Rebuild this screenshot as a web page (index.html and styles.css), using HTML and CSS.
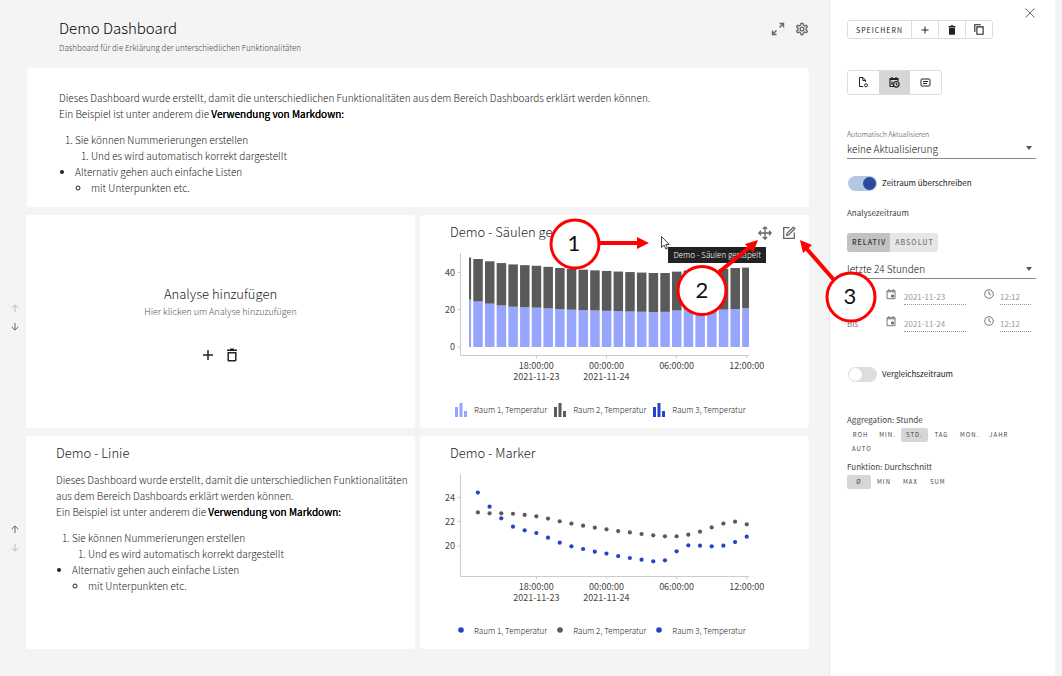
FILE: index.html
```html
<!DOCTYPE html>
<html lang="de">
<head>
<meta charset="utf-8">
<meta name="viewport" content="width=device-width, initial-scale=1">
<title>Demo Dashboard</title>
<link rel="stylesheet" href="styles.css">
</head>
<body>
<div class="app">
  <main class="dashboard">
    <header class="page-header">
      <div class="page-heading">
        <h1 class="page-title">Demo Dashboard</h1>
        <p class="page-subtitle">Dashboard für die Erklärung der unterschiedlichen Funktionalitäten</p>
      </div>
      <div class="page-actions">
        <button class="icon-button" type="button" aria-label="Vollbild">
          <svg width="14" height="14" viewBox="0 0 14 14" fill="none" stroke="currentColor" stroke-width="1.4"><path d="M8.5 1.500h4v4M12.300 1.700L8.500 5.500M5.500 12.500h-4v-4M1.700 12.300L5.500 8.500"/></svg>
        </button>
        <button class="icon-button" type="button" aria-label="Einstellungen">
          <svg width="14" height="14" viewBox="1 1 22 22" fill="currentColor"><path d="M12 8a4 4 0 1 1 0 8 4 4 0 0 1 0-8m0 2a2 2 0 1 0 0 4 2 2 0 0 0 0-4m-2 12c-.25 0-.46-.18-.5-.42l-.37-2.65c-.63-.25-1.170-.59-1.690-.99l-2.490 1.010c-.22.08-.49 0-.61-.22l-2-3.460c-.13-.22-.07-.49.12-.64l2.110-1.660L4.500 12l.07-1-2.110-1.630c-.19-.15-.25-.42-.12-.64l2-3.460c.12-.22.39-.31.61-.22l2.490 1c.52-.39 1.060-.73 1.690-.98l.37-2.650c.04-.24.25-.42.5-.42h4c.25 0 .46.18.5.42l.37 2.650c.63.25 1.170.59 1.690.98l2.490-1c.22-.09.49 0 .61.22l2 3.460c.13.22.07.49-.12.64L19.430 11l.07 1-.07 1 2.110 1.630c.19.15.25.42.12.64l-2 3.460c-.12.22-.39.31-.61.22l-2.490-1c-.52.39-1.060.73-1.690.98l-.37 2.650c-.04.24-.25.42-.5.42zm1.250-18l-.37 2.610c-1.200.25-2.260.89-3.030 1.780L5.440 7.350l-.75 1.300L6.800 10.200a6.500 6.500 0 0 0 0 3.600l-2.120 1.560.75 1.300 2.430-1.040c.77.88 1.820 1.520 3.010 1.760l.37 2.620h1.520l.37-2.610c1.190-.25 2.240-.89 3.010-1.770l2.430 1.040.75-1.300-2.120-1.550c.4-1.170.4-2.440 0-3.610l2.110-1.550-.75-1.300-2.410 1.040a5.420 5.420 0 0 0-3.030-1.770L12.750 4z"/></svg>
        </button>
      </div>
    </header>

    <section class="card intro">
      <div class="markdown">
        <p>Dieses Dashboard wurde erstellt, damit die unterschiedlichen Funktionalitäten aus dem Bereich Dashboards erklärt werden können.<br>Ein Beispiel ist unter anderem die <strong>Verwendung von Markdown:</strong></p>
        <ol><li>Sie können Nummerierungen erstellen<ol><li>Und es wird automatisch korrekt dargestellt</li></ol></li></ol>
        <ul><li>Alternativ gehen auch einfache Listen<ul><li>mit Unterpunkten etc.</li></ul></li></ul>
      </div>
    </section>

    <div class="row">
      <div class="row-move">
        <button class="icon-button faded" type="button" aria-label="Zeile nach oben" disabled><svg width="8" height="8" viewBox="0 0 8 8" fill="none" stroke="currentColor"><path d="M4 8V1M.7 4.200L4 .9l3.300 3.300"/></svg></button>
        <button class="icon-button" type="button" aria-label="Zeile nach unten"><svg width="8" height="8" viewBox="0 0 8 8" fill="none" stroke="currentColor"><path d="M4 0v7M.7 3.800L4 7.100l3.300-3.300"/></svg></button>
      </div>
      <section class="card empty-card">
        <h2 class="card-title">Analyse hinzufügen</h2>
        <p class="empty-hint">Hier klicken um Analyse hinzuzufügen</p>
        <div class="empty-actions">
          <button class="icon-button dark" type="button" aria-label="Hinzufügen"><svg width="10" height="14" viewBox="0 0 10 14" fill="none" stroke="currentColor" stroke-width="1.500"><path d="M5 2v10M0 7h10"/></svg></button>
          <button class="icon-button dark" type="button" aria-label="Löschen"><svg width="12" height="14" viewBox="0 0 12 14" fill="none" stroke="currentColor" stroke-width="1.500"><path d="M1 2.200h10M4 1.200h4M2.200 4.700h7.600v7.400q0 .7-.7.700H2.900q-.7 0-.7-.7z"/></svg></button>
        </div>
      </section>
      <section class="card chart-card">
        <div class="card-head">
          <h2 class="card-title">Demo - Säulen gestapelt</h2>
          <div class="card-actions">
            <button class="icon-button" type="button" aria-label="Verschieben"><svg width="14" height="14" viewBox="0 0 14 14" fill="none" stroke="currentColor" stroke-width="1.300"><path d="M7 1v12M1 7h12M4.800 3L7 .9 9.200 3M4.800 11L7 13.100 9.200 11M3 4.800L.9 7 3 9.200M11 4.800L13.100 7 11 9.200"/></svg></button>
            <button class="icon-button" type="button" aria-label="Bearbeiten"><svg width="14" height="14" viewBox="0 0 14 14" fill="none" stroke="currentColor" stroke-width="1.300"><path d="M7.500 1.700H1.700v10.600h10.600V6.500M4.600 9.400l.5-2L11.300 1.200l1.500 1.500L6.600 8.900z"/></svg></button>
          </div>
        </div>
        <svg class="chart" id="bar-chart" viewBox="0 0 389 140" role="img" aria-label="Gestapelte Säulen"></svg>
        <ul class="legend">
          <li><svg class="legend-icon series-1" width="12" height="14" viewBox="0 0 12 14"><path d="M0 4h3v10H0zM4.500 0h3v14h-3zM9 8h3v6H9z"/></svg>Raum 1, Temperatur</li>
          <li><svg class="legend-icon series-2" width="12" height="14" viewBox="0 0 12 14"><path d="M0 4h3v10H0zM4.500 0h3v14h-3zM9 8h3v6H9z"/></svg>Raum 2, Temperatur</li>
          <li><svg class="legend-icon series-3" width="12" height="14" viewBox="0 0 12 14"><path d="M0 4h3v10H0zM4.500 0h3v14h-3zM9 8h3v6H9z"/></svg>Raum 3, Temperatur</li>
        </ul>
        <div class="tooltip" role="tooltip">Demo - Säulen gestapelt</div>
        <svg class="callouts" width="340" height="115" viewBox="540 215 340 115">
          <path class="cursor" d="M661.500 236.500v11l2.600-2.400 1.700 4 1.700-.8-1.700-3.800h3.400z"/>
          <g class="callout-arrow"><path d="M600 243h40M718 273l33-27M834 280l-28-32"/></g>
          <g class="callout-head"><path d="M637 237l12 6-12 6zM758 240l-5 13-8-9zM800 240l12 5-9 8z"/></g>
          <g class="callout-ring"><circle cx="575" cy="244" r="24"/><circle cx="702" cy="290.500" r="24"/><circle cx="851" cy="297" r="24"/></g>
          <g class="callout-number"><text x="574" y="251">1</text><text x="702" y="298">2</text><text x="850" y="304">3</text></g>
        </svg>
      </section>
    </div>

    <div class="row">
      <div class="row-move">
        <button class="icon-button" type="button" aria-label="Zeile nach oben"><svg width="8" height="8" viewBox="0 0 8 8" fill="none" stroke="currentColor"><path d="M4 8V1M.7 4.200L4 .9l3.300 3.300"/></svg></button>
        <button class="icon-button faded" type="button" aria-label="Zeile nach unten" disabled><svg width="8" height="8" viewBox="0 0 8 8" fill="none" stroke="currentColor"><path d="M4 0v7M.7 3.800L4 7.100l3.300-3.300"/></svg></button>
      </div>
      <section class="card text-card">
        <h2 class="card-title">Demo - Linie</h2>
        <div class="markdown">
          <p>Dieses Dashboard wurde erstellt, damit die unterschiedlichen Funktionalitäten aus dem Bereich Dashboards erklärt werden können.<br>Ein Beispiel ist unter anderem die <strong>Verwendung von Markdown:</strong></p>
          <ol><li>Sie können Nummerierungen erstellen<ol><li>Und es wird automatisch korrekt dargestellt</li></ol></li></ol>
          <ul><li>Alternativ gehen auch einfache Listen<ul><li>mit Unterpunkten etc.</li></ul></li></ul>
        </div>
      </section>
      <section class="card chart-card">
        <div class="card-head"><h2 class="card-title">Demo - Marker</h2></div>
        <svg class="chart" id="marker-chart" viewBox="0 0 389 140" role="img" aria-label="Marker"></svg>
        <ul class="legend">
          <li><svg class="legend-icon series-3" width="12" height="14" viewBox="0 0 12 14"><circle cx="6" cy="6" r="2.800"/></svg>Raum 1, Temperatur</li>
          <li><svg class="legend-icon series-2" width="12" height="14" viewBox="0 0 12 14"><circle cx="6" cy="6" r="2.800"/></svg>Raum 2, Temperatur</li>
          <li><svg class="legend-icon series-3" width="12" height="14" viewBox="0 0 12 14"><circle cx="6" cy="6" r="2.800"/></svg>Raum 3, Temperatur</li>
        </ul>
      </section>
    </div>
  </main>

  <aside class="panel">
    <button class="icon-button close" type="button" aria-label="Schließen"><svg width="10" height="10" viewBox="0 0 10 10" fill="none" stroke="currentColor"><path d="M.5.5l9 9M9.500.5l-9 9"/></svg></button>
    <div class="button-group actions">
      <button class="wide" type="button">SPEICHERN</button>
      <button type="button" aria-label="Neu"><svg width="8" height="8" viewBox="0 0 8 8" fill="none" stroke="currentColor"><path d="M4 .5v7M.5 4h7"/></svg></button>
      <button type="button" aria-label="Löschen"><svg width="8" height="10" viewBox="0 0 8 10" fill="currentColor"><path d="M.5 1h2l.5-.8h2l.5.8h2v1.200h-7zM1 2.800h6V9q0 .8-.8.8H1.800Q1 9.800 1 9z"/></svg></button>
      <button type="button" aria-label="Kopieren"><svg width="10" height="11" viewBox="0 0 10 11" fill="none" stroke="currentColor" stroke-width="1.100"><path d="M.8 8V.8h6M2.900 2.900h6.200v7.300H2.900z"/></svg></button>
    </div>
    <div class="button-group tabs">
      <button type="button" aria-label="Dokument"><svg width="11" height="11" viewBox="0 0 11 11" fill="none" stroke="currentColor"><path d="M5 9.500H1.500v-9H5l2.500 2.700V5M4.800.7v2.800h2.700"/><circle cx="8" cy="8.300" r="1.500"/></svg></button>
      <button class="selected" type="button" aria-label="Zeitraum" aria-pressed="true"><svg width="11" height="11" viewBox="0 0 11 11" fill="none" stroke="currentColor" stroke-width="1.200"><path d="M5 9.500H1V1.500h8V4M1 2.500h8M3 0v2M7 0v2M3 4.500v3.500"/><circle cx="7.300" cy="7.300" r="2.800"/><path d="M7.300 5.700v1.700l1.200.7"/></svg></button>
      <button type="button" aria-label="Beschreibung"><svg width="11" height="9" viewBox="0 0 11 9" fill="none" stroke="currentColor"><rect x="1" y="1" width="9" height="7" rx="1"/><path d="M3 3.500h5M3 5.500h4"/></svg></button>
    </div>

    <label class="field-label" for="refresh">Automatisch Aktualisieren</label>
    <div class="select-wrap">
      <select id="refresh"><option>keine Aktualisierung</option></select>
    </div>

    <label class="switch override"><input type="checkbox" checked><span>Zeitraum überschreiben</span></label>

    <p class="small-text period-title">Analysezeitraum</p>
    <div class="mode-group">
      <button class="selected" type="button" aria-pressed="true">RELATIV</button>
      <button type="button">ABSOLUT</button>
    </div>
    <div class="select-wrap compact">
      <select aria-label="Zeitraum"><option>letzte 24 Stunden</option></select>
    </div>
    <div class="range-row">
      <label for="from-date">Von</label>
      <svg width="10" height="11" viewBox="0 0 10 11" fill="none" stroke="currentColor"><path d="M1 1.700h8v8H1zM1 2.800h8M2.800 0v2M7.200 0v2"/><path d="M5.500 6h2v2h-2z" fill="currentColor"/></svg>
      <input class="date-input" id="from-date" type="text" value="2021-11-23" disabled>
      <svg width="10" height="10" viewBox="0 0 10 10" fill="none" stroke="currentColor"><circle cx="5" cy="5" r="4.300"/><path d="M5 2.200V5l2 1.300"/></svg>
      <input type="text" value="12:12" aria-label="Uhrzeit von" disabled>
    </div>
    <div class="range-row">
      <label for="to-date">Bis</label>
      <svg width="10" height="11" viewBox="0 0 10 11" fill="none" stroke="currentColor"><path d="M1 1.700h8v8H1zM1 2.800h8M2.800 0v2M7.200 0v2"/><path d="M5.500 6h2v2h-2z" fill="currentColor"/></svg>
      <input class="date-input" id="to-date" type="text" value="2021-11-24" disabled>
      <svg width="10" height="10" viewBox="0 0 10 10" fill="none" stroke="currentColor"><circle cx="5" cy="5" r="4.300"/><path d="M5 2.200V5l2 1.300"/></svg>
      <input type="text" value="12:12" aria-label="Uhrzeit bis" disabled>
    </div>

    <label class="switch compare"><input type="checkbox"><span>Vergleichszeitraum</span></label>

    <p class="small-text">Aggregation: Stunde</p>
    <div class="chips">
      <button type="button">ROH</button><button type="button">MIN.</button><button class="selected" type="button" aria-pressed="true">STD.</button><button type="button">TAG</button><button type="button">MON.</button><button type="button">JAHR</button><button type="button">AUTO</button>
    </div>
    <p class="small-text">Funktion: Durchschnitt</p>
    <div class="chips narrow">
      <button class="selected" type="button" aria-pressed="true">Ø</button><button type="button">MIN</button><button type="button">MAX</button><button type="button">SUM</button>
    </div>
  </aside>
</div>
<script src="charts.js"></script>
</body>
</html>
```

FILE: styles.css
```css
* { box-sizing: border-box; }

body {
  margin: 0;
  background: #f4f4f4;
  color: #222;
  font: 300 10px/16px "Noto Sans CJK SC", "Open Sans", sans-serif;
}

h1, h2, p, ul, ol { margin: 0; padding: 0; font-weight: inherit; }
button, input, select { font: inherit; color: inherit; border: 0; margin: 0; padding: 0; background: none; }
button { cursor: pointer; }
svg { display: block; }

.app {
  display: grid;
  grid-template-columns: minmax(0, 1fr) 233px;
  min-height: 100vh;
}

.dashboard { padding: 0 20px 27px 0; }

.icon-button { display: flex; align-items: center; justify-content: center; color: #666; }
.icon-button.faded { color: #bbb; }
.icon-button.dark { color: #222; }

.page-header {
  display: flex;
  justify-content: space-between;
  height: 68px;
  padding: 17px 0 0 59px;
}
.page-title { font-size: 15px; line-height: 22px; color: #000; }
.page-subtitle { margin-top: 4px; font-size: 8px; line-height: 10px; color: #444; }
.page-actions { display: flex; gap: 10px; height: 24px; align-items: center; }

.card { position: relative; background: #fff; border-radius: 3px; }
.card-title { font-size: 13px; line-height: 18px; }

.intro { margin: 0 0 8px 27px; padding: 22px 32px 11px; }

.markdown { line-height: 16px; }
.markdown strong { font-weight: 400; color: #000; text-shadow: 0 0 0 #000; }
.markdown p { margin-bottom: 10px; }
.markdown ol, .markdown ul { padding-left: 16px; }

.row {
  display: grid;
  grid-template-columns: 21px minmax(0, 1fr) minmax(0, 1fr);
  column-gap: 5px;
  min-height: 213px;
  margin-bottom: 8px;
}
.row-move { display: flex; flex-direction: column; justify-content: center; align-items: center; gap: 11px; padding: 0 0 8px 9px; }

.empty-card { display: flex; flex-direction: column; align-items: center; padding-top: 70px; }
.empty-hint { margin-top: 1px; font-size: 9px; color: #555; }
.empty-actions { display: flex; gap: 13px; margin-top: 28px; }

.text-card { padding: 8px 4px 8px 30px; }
.text-card .markdown { margin-top: 10px; }

.card-head { display: flex; justify-content: space-between; height: 30px; padding: 8px 13px 0 30px; }
.card-actions { display: flex; gap: 10px; height: 20px; align-items: center; }
.chart { width: 100%; height: auto; }
.chart text { font-size: 9px; font-weight: 400; fill: #444; text-anchor: middle; }
.chart .y-label { text-anchor: end; }
.axis { fill: none; stroke: #ccc; }
.series-1 { fill: #98a5fd; }
.series-2 { fill: #5a5a5a; }
.series-3 { fill: #2344c6; }

.legend { display: flex; gap: 7px; padding: 18px 0 0 35px; list-style: none; font-size: 8px; line-height: 14px; }
.legend li { display: flex; gap: 7px; white-space: nowrap; }

.tooltip {
  position: absolute;
  top: 32px;
  right: 43px;
  padding: 0 5px;
  background: #222;
  color: #fff;
  font-size: 8px;
  line-height: 16px;
}
.callouts { position: absolute; top: 0; right: -71px; z-index: 2; pointer-events: none; }
.cursor { fill: #fff; stroke: #444; }
.callout-arrow { fill: none; stroke: #f00; stroke-width: 4; }
.callout-head { fill: #f00; }
.callout-ring { fill: #fff; stroke: #f00; stroke-width: 3; }
.callout-number { font: 22px Lato, sans-serif; fill: #111; text-anchor: middle; }

.panel {
  position: relative;
  padding: 20px 19px 20px 17px;
  background: #fff;
  border-left: 1px solid #e8e8e8;
  border-right: 7px solid #f4f4f4;
}
.close { position: absolute; top: 8px; right: 20px; }

.button-group {
  display: flex;
  width: max-content;
  border: 1px solid #ddd;
  border-radius: 3px;
  color: #222;
}
.button-group button { display: flex; align-items: center; justify-content: center; width: 27px; height: 17px; }
.button-group button + button { border-left: 1px solid #ddd; }
.button-group .wide { width: 63px; font-size: 7px; font-weight: 400; letter-spacing: 1px; }
.tabs { margin-top: 31px; }
.tabs button, .tabs button + button { width: 31px; height: 23px; border: 0; }
.tabs .selected { background: #d6d6d6; }

.field-label { display: block; margin-top: 34px; font-size: 7px; line-height: 10px; color: #444; }
.select-wrap { position: relative; border-bottom: 1px solid #888; }
.select-wrap::after {
  content: "";
  position: absolute;
  top: 7px;
  right: 4px;
  border: 3px solid transparent;
  border-top: 4px solid #555;
  border-bottom: 0;
}
.select-wrap select { display: block; width: 100%; height: 19px; appearance: none; line-height: 18px; color: #111; }

.switch { display: flex; align-items: center; gap: 5px; padding-left: 1px; font-size: 8px; line-height: 16px; color: #222; }
.switch input {
  appearance: none;
  display: flex;
  width: 29px;
  height: 15px;
  padding: 1px;
  border-radius: 8px;
  background: #ddd;
}
.switch input::before { content: ""; width: 13px; height: 13px; border-radius: 50%; background: #fff; }
.switch input:checked { justify-content: flex-end; background: #b3c6e2; }
.switch input:checked::before { background: #294a9d; }
.switch span, .small-text { font-weight: 400; }
.override { margin-top: 16px; }
.compare { margin: 23px 0 30px; }

.small-text { font-size: 8px; line-height: 16px; color: #444; }
.period-title { margin-top: 14px; }
.mode-group { display: flex; width: max-content; margin-top: 12px; border-radius: 3px; overflow: hidden; background: #e6e6e6; }
.mode-group button { padding: 0 4px 0 5px; font-size: 7px; font-weight: 500; line-height: 19px; letter-spacing: 1px; color: #777; }
.mode-group .selected { background: #c2c2c2; color: #333; }
.compact { margin-top: 8px; margin-bottom: 10px; }
.compact select { height: 18px; }

.range-row {
  display: grid;
  grid-template-columns: 39px 18px 80px 16px 31px;
  align-items: start;
  height: 27px;
  font-size: 8px;
  font-weight: 400;
  line-height: 16px;
  color: #777;
}
.range-row input { width: 31px; height: 16px; border-bottom: 1px dotted #999; color: #999; }
.range-row .date-input { width: 62px; }

.chips { display: flex; flex-wrap: wrap; margin-bottom: 3px; }
.chips button { min-width: 27px; padding: 0 5px; border-radius: 2px; font-size: 6px; font-weight: 400; line-height: 14px; letter-spacing: 1px; color: #444; }
.narrow button { min-width: 24px; padding: 0 6px; }
.chips .selected { background: #d6d6d6; }
```

FILE: charts.js
```js
const room1 = [25.4, 24.4, 23.25, 22.29, 21.61, 21.31, 21.09, 20.71, 20.3, 20, 19.78, 19.56, 19.4, 19.2, 19.04, 18.9, 18.77, 18.85, 19.59, 20.08, 20.05, 20, 20.05, 20.35, 20.79];
const room2 = [22.6, 22.78, 22.7, 22.7, 22.67, 22.57, 22.46, 22.27, 22.05, 21.86, 21.69, 21.53, 21.39, 21.25, 21.14, 21.01, 20.9, 20.82, 20.82, 20.95, 21.2, 21.55, 21.86, 22.02, 21.8];

const AXIS_X = 40.5;
const RIGHT = 329;
const hourX = (i) => 46.2 + i * 11.69;

function add(svg, tag, attrs, text) {
  const node = document.createElementNS("http://www.w3.org/2000/svg", tag);
  for (const key in attrs) node.setAttribute(key, attrs[key]);
  if (text !== undefined) node.textContent = text;
  svg.appendChild(node);
}

function axes(svg, top, bottom, yTicks) {
  let d = `M${AXIS_X} ${top}V${bottom}H${RIGHT}`;
  for (const [label, y] of yTicks) {
    d += `M${AXIS_X - 3} ${y}H${AXIS_X}`;
    add(svg, "text", { class: "y-label", x: 35, y: y + 3 }, label);
  }
  const xTicks = [[6, "18:00:00", "2021-11-23"], [12, "00:00:00", "2021-11-24"], [18, "06:00:00"], [24, "12:00:00"]];
  for (const [i, time, date] of xTicks) {
    const x = hourX(i);
    d += `M${x} ${bottom}v3`;
    add(svg, "text", { x, y: bottom + 13 }, time);
    if (date) add(svg, "text", { x, y: bottom + 24 }, date);
  }
  add(svg, "path", { class: "axis", d });
}

const bars = document.getElementById("bar-chart");
axes(bars, 8, 110.5, [["40", 27.5], ["20", 64.5], ["0", 102]]);
room1.forEach((value, i) => {
  const left = Math.max(49, hourX(i) - 4.6);
  const width = Math.min(RIGHT, hourX(i) + 4.9) - left;
  const h1 = value * 1.865;
  const h2 = room2[i] * 1.865;
  add(bars, "rect", { class: "series-1", x: left, y: 102 - h1, width, height: h1 });
  add(bars, "rect", { class: "series-2", x: left, y: 102 - h1 - h2, width, height: h2 });
});

const markers = document.getElementById("marker-chart");
axes(markers, 8, 110.5, [["24", 31.5], ["22", 55.5], ["20", 80]]);
for (let i = 1; i < room1.length; i++) {
  add(markers, "circle", { class: "series-2", cx: hourX(i), cy: 80.3 - (room2[i] - 20) * 12.2, r: 2.1 });
  add(markers, "circle", { class: "series-3", cx: hourX(i), cy: 80.3 - (room1[i] - 20) * 12.2, r: 2.1 });
}
```
